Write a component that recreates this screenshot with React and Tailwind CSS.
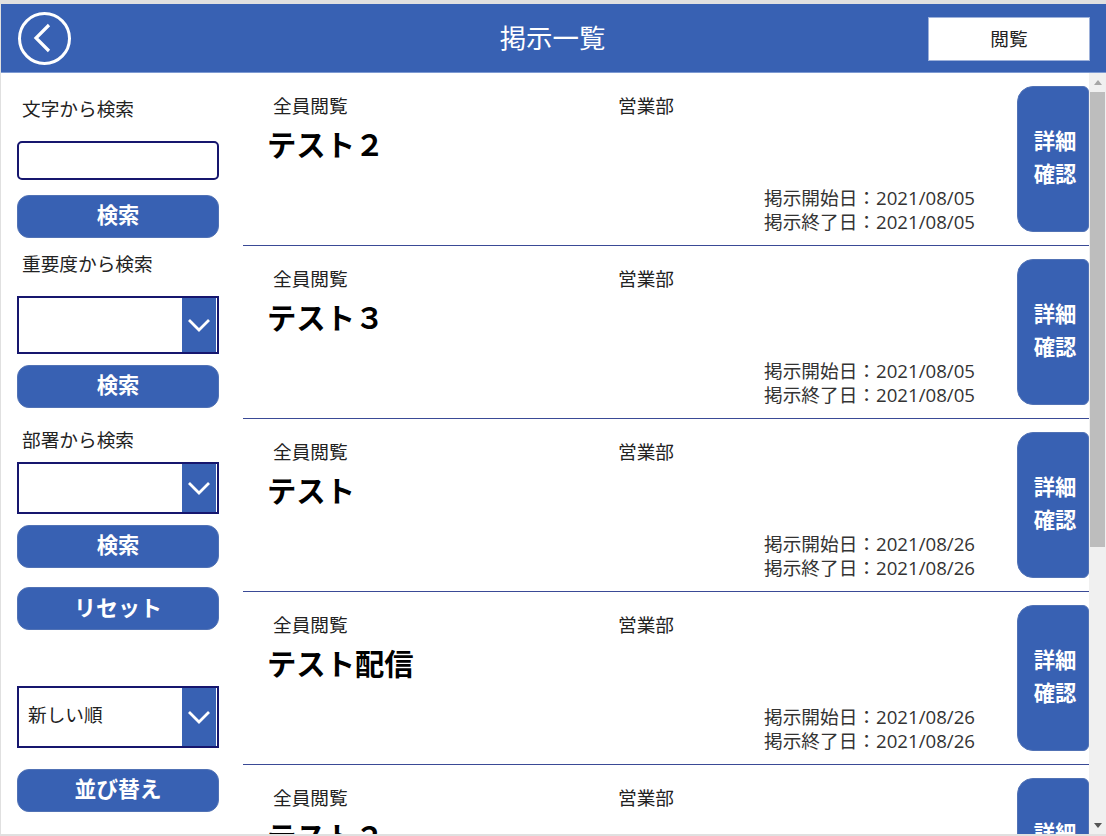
const font = "font-['Open_Sans','Noto_Sans_CJK_JP',sans-serif]";

function Chevron() {
  return (
    <div className="w-[35px] shrink-0 bg-[#3861b3] border-r border-r-[#ffffff] flex items-center justify-center">
      <svg width="24" height="16" viewBox="0 0 24 16" fill="none" stroke="white" strokeWidth="2.8">
        <path d="M2 3 L12 13 L22 3" />
      </svg>
    </div>
  );
}

function Select({ h, mt, value }) {
  return (
    <div className={`${h} ${mt} w-[202px] border-2 border-[#16166e] bg-white flex`}>
      <div className="flex-1 pl-[9px] pb-[4px] flex items-center text-[18.67px] text-[#222]">{value}</div>
      <Chevron />
    </div>
  );
}

function Btn({ label, mt, size = "text-[21.33px]" }) {
  return (
    <button className={`${mt} w-[202px] h-[43px] rounded-[12px] bg-[#3861b3] border border-[#5172b5] text-white font-bold ${size} flex items-center justify-center leading-none pb-[4px]`}>
      {label}
    </button>
  );
}

function Label({ children, mt }) {
  return <div className={`${mt} pl-[5px] text-[18.67px] leading-[24px] text-[#222]`}>{children}</div>;
}

function Row({ title, start, end }) {
  return (
    <div className="h-[173px] shrink-0 border-b border-b-[#3a4a96] flex">
      <div className="flex-1 flex flex-col pl-[25px] pr-[42px] min-w-0">
        <div className="flex pt-[21px] pl-[5px] text-[18.67px] leading-[24px] text-[#222]">
          <div className="w-[345px]">全員閲覧</div>
          <div>営業部</div>
        </div>
        <div className="mt-[4px] -ml-px h-[46px] text-[29.33px] font-bold leading-[46px] text-black whitespace-nowrap">{title}</div>
        <div className="mt-[18px] text-right text-[18.67px] leading-[24px] text-[#333]">
          <div>掲示開始日：{start}</div>
          <div>掲示終了日：{end}</div>
        </div>
      </div>
      <div className="pt-[13px] shrink-0">
        <button className="w-[72px] h-[146px] rounded-l-[16px] rounded-r-[6px] bg-[#3861b3] border border-[#5172b5] text-white font-bold text-[21.33px] leading-[33px] flex flex-col items-center justify-center pl-[4px] pb-[5px]">
          <span>詳細</span>
          <span>確認</span>
        </button>
      </div>
    </div>
  );
}

export default function App() {
  return (
    <div className={`${font} w-[1106px] h-[836px] overflow-hidden bg-[#e0e0e0] pt-[4px] pl-px pb-[2px] flex flex-col`}>
      <header className="h-[69px] shrink-0 bg-[#3861b3] border-b border-b-[#7d9ad2] grid grid-cols-[1fr_auto_1fr] items-center">
        <div className="ml-[17px] w-[53px] h-[53px] rounded-full border-[3.5px] border-white flex items-center justify-center">
          <svg width="20" height="30" viewBox="0 0 20 30" fill="none" stroke="white" strokeWidth="3.2" className="mr-[6px]">
            <path d="M17 2 L4 15 L17 28" />
          </svg>
        </div>
        <div className="text-white text-[26.4px] leading-none -translate-x-px">掲示一覧</div>
        <div className="flex justify-end">
          <button className="w-[162px] h-[44px] mt-[2px] mr-[16px] bg-white border border-[#9db1da] text-[18.67px] text-[#222] flex items-center justify-center">閲覧</button>
        </div>
      </header>
      <div className="flex-1 flex min-h-0 bg-white">
        <aside className="w-[242px] shrink-0 pl-[16px] flex flex-col">
          <Label mt="mt-[24px]">文字から検索</Label>
          <div className="mt-[20px] w-[202px] h-[39px] rounded-[5px] border-2 border-[#16166e] bg-white" />
          <Btn label="検索" mt="mt-[15px]" />
          <Label mt="mt-[14px]">重要度から検索</Label>
          <Select h="h-[58px]" mt="mt-[20px]" />
          <Btn label="検索" mt="mt-[11px]" />
          <Label mt="mt-[20px]">部署から検索</Label>
          <Select h="h-[52px]" mt="mt-[10px]" />
          <Btn label="検索" mt="mt-[11px]" />
          <Btn label="リセット" mt="mt-[19px]" size="text-[22px]" />
          <Select h="h-[62px]" mt="mt-[56px]" value="新しい順" />
          <Btn label="並び替え" mt="mt-[21px]" size="text-[21.8px]" />
        </aside>
        <main className="flex-1 min-w-0 flex flex-col overflow-hidden">
          <Row title="テスト２" start="2021/08/05" end="2021/08/05" />
          <Row title="テスト３" start="2021/08/05" end="2021/08/05" />
          <Row title="テスト" start="2021/08/26" end="2021/08/26" />
          <Row title="テスト配信" start="2021/08/26" end="2021/08/26" />
          <Row title="テスト２" start="2021/08/26" end="2021/08/26" />
        </main>
        <div className="w-[17px] shrink-0 bg-[#f0f0f0] flex flex-col items-center">
          <div className="h-[19px] flex items-center justify-center">
            <svg width="8" height="5" viewBox="0 0 8 5"><path d="M0 5 L4 0 L8 5 Z" fill="#a6a6a6" /></svg>
          </div>
          <div className="w-[15px] h-[455px] bg-[#bdbdbd]" />
          <div className="flex-1" />
          <div className="h-[18px] flex items-center justify-center">
            <svg width="8" height="5" viewBox="0 0 8 5"><path d="M0 0 L4 5 L8 0 Z" fill="#555" /></svg>
          </div>
        </div>
      </div>
    </div>
  );
}
